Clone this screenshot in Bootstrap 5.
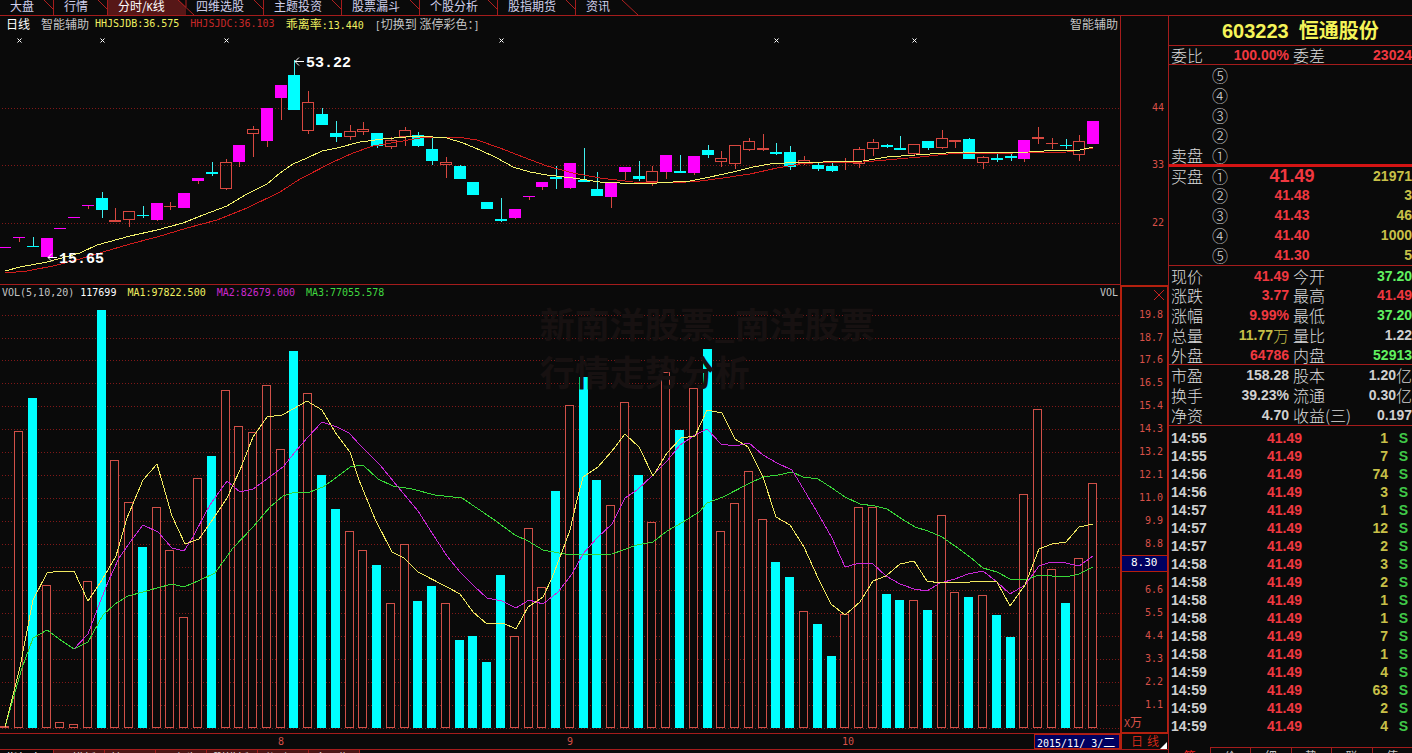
<!DOCTYPE html>
<html lang="zh-CN">
<head>
<meta charset="utf-8">
<meta name="viewport" content="width=device-width, initial-scale=1">
<title>603223 恒通股份</title>
<link href="https://cdn.jsdelivr.net/npm/bootstrap@5.3.0/dist/css/bootstrap.min.css" rel="stylesheet">
<style>
:root { --line:#a41c1c; --line2:#b4200e; --up:#d85048; --dim:#c4c4c4; --bg:#0a0a0a; }
body { background:var(--bg); color:var(--dim); font:400 12px/16px "Noto Sans CJK SC", sans-serif; }
a { color:inherit; text-decoration:none; }
.num { font:400 10px/16px "DejaVu Sans Mono", monospace; white-space:pre; }
.c-y { color:#f0f060; } .c-r { color:#c82828; } .c-m { color:#cc28cc; } .c-g { color:#40d840; } .c-w { color:#fff; }

.menu-bar { height:16px; border-bottom:1px solid var(--line); }
.menu-tab { width:78px; height:15px; line-height:11px; padding-left:10px; color:#d0d0ec; border-right:1px solid var(--line); position:relative; }
.menu-tab.short { width:54px; }
.menu-tab svg { position:absolute; top:0; right:0; }
.menu-tab.on { border-right:0; color:#fff; background:#561717; }
.menu-tab.on svg { right:-8px; z-index:1; }
.menu-tab.end { width:62px; border-right:0; }

.chart-grid { display:grid; grid-template-columns:minmax(0,1fr) 48px; grid-template-rows:minmax(0,269fr) minmax(0,449fr); }
.pane { position:relative; overflow:hidden; border-bottom:1px solid var(--line); }
.pane > svg { position:absolute; inset:0; width:100%; height:100%; }
.pane-head { position:relative; height:16px; padding:0 2px; z-index:2; }
.gap-head { gap:11px; }
.price-scale { position:relative; border-left:1px solid var(--line); }
.vol-scale { position:relative; border:2px solid var(--line2); border-right-width:1px; }
.tick-label { position:absolute; right:4px; margin-top:-8px; color:var(--up); }
.now-label { position:absolute; left:0; right:0; height:17px; margin-top:-9px; padding-left:9px; background:#000060; border:1px solid var(--line2); border-width:1px 0; color:#fff; line-height:14px; font-size:11px; }
.unit-label { position:absolute; left:2px; bottom:0; color:var(--up); }
.close-btn { position:absolute; right:3px; top:3px; width:10px; height:10px; line-height:0; }
.flag { position:absolute; color:#fff; font:700 15px/16px "Liberation Mono", monospace; margin-top:-6px; white-space:nowrap; }
.flag svg { vertical-align:top; margin-top:1px; }
.dot-mark { position:absolute; width:5px; height:5px; margin:-2px 0 0 -2px; }
.dot-mark svg { display:block; }
.ghost { position:absolute; left:48.2%; top:14px; width:360px; font:700 35px/48px "Noto Sans CJK SC", sans-serif; color:#171111; z-index:1; }

.date-bar { height:16px; border-bottom:1px solid var(--line); }
.dates { position:relative; flex:1; }
.date-tick { position:absolute; color:var(--up); margin-left:-3px; line-height:15px; }
.date-now { position:absolute; right:0; top:0; width:86px; height:15px; background:#000060; border:1px solid var(--line2); color:#fff; line-height:13px; padding-left:2px; white-space:nowrap; }
.date-now .num { line-height:12px; }
.period { width:48px; padding:0 9px; line-height:14px; color:#d02818; background:none; border:0; border-left:2px solid var(--line2); position:relative; font-size:12px; }
.period svg { position:absolute; right:1px; bottom:0; }
.foot-tabs { height:3px; overflow:hidden; }
.foot-tabs a { width:51px; padding:0 6px; line-height:15px; background:#4c1616; color:#ddd; border-right:1px solid var(--line); white-space:nowrap; }
.foot-tabs a.on { width:54px; background:none; color:#fff; }

.quote { width:244px; border-left:1px solid var(--line); overflow:hidden; }
.stock-name { height:30px; font:700 20px/30px "Liberation Sans","Noto Sans CJK SC", sans-serif; color:#f4f458; border-bottom:1px solid var(--line); padding-left:53px; gap:10px; margin:0; }
.quote table { width:100%; table-layout:fixed; border-collapse:separate; border-spacing:0; font:700 14px/16px "Liberation Sans","Noto Sans CJK SC", sans-serif; }
.quote td, .quote th { padding:0; height:20px; white-space:nowrap; vertical-align:middle; }
.quote th { font:300 16px/16px "Noto Sans CJK SC", sans-serif; padding-left:2px; color:#dcdcdc; }
.quote th.second { padding-left:4px; }
.quote i { display:block; font:300 16px/16px "Noto Sans CJK SC", sans-serif; color:#dcdcdc; }
.quote td i.unit { display:inline-block; vertical-align:top; color:inherit; }
.block-line { border-bottom:1px solid var(--line); }
.quote .block-ratio tr > * { height:18px; }
.quote .block-ask tr:last-child > * { height:19px; }
.block-bid { border-top:3px solid #d41414; }
.quote .block-bid tr:first-child > * { height:18px; }
.quote .block-day tr:first-child > *, .quote .block-day tr:last-child > * { height:19px; }
.p-up { color:#f03840; } .p-dn { color:#60f060; } .p-vol { color:#c8c048; } .p-s { color:#40c848; } .p-n { color:#d0d0d0; }
.big { font-size:18px; }
.block-trades { flex:1; min-height:0; overflow:hidden; padding-top:3px; }
.quote .block-trades td { height:18px; }
.quote .block-trades td:first-child { padding-left:2px; }
.quote .block-trades td:last-child { padding-left:7px; }
.side-tabs { height:6px; overflow:hidden; }
.side-tabs a { flex:1; text-align:center; line-height:16px; border-top:1px solid var(--line); border-left:1px solid var(--line); }
.side-tabs a.on { border-color:transparent; color:#f02020; }
</style>
</head>
<body>
<div class="vh-100 d-flex flex-column overflow-hidden">
  <nav class="menu-bar d-flex flex-shrink-0" id="menu"></nav>
  <main class="d-flex flex-grow-1" style="min-height:0">
    <div class="d-flex flex-column flex-grow-1" style="min-width:0">
      <div class="chart-grid flex-grow-1" style="min-height:0">
        <section class="pane" id="kPane">
          <div class="pane-head d-flex gap-head">
            <span class="c-w ps-1">日线</span><span>智能辅助</span>
            <span class="num c-y" style="margin-left:-5px">HHJSJDB:36.575</span>
            <span class="num c-r">HHJSJDC:36.103</span>
            <span class="c-y">乖离率<span class="num">:13.440</span></span>
            <span><span class="num">[</span>切换到 涨停彩色：<span class="num">]</span></span>
            <span class="ms-auto">智能辅助</span>
          </div>
          <svg id="kChart" viewBox="0 16 1120 268" preserveAspectRatio="none" shape-rendering="crispEdges"></svg>
        </section>
        <div class="price-scale" id="kScale"></div>
        <section class="pane" id="vPane">
          <div class="pane-head d-flex gap-head num">
            <span><span>VOL(5,10,20)</span> <span class="c-w">117699</span></span>
            <span class="c-y">MA1:97822.500</span><span class="c-m">MA2:82679.000</span><span class="c-g">MA3:77055.578</span>
            <span class="ms-auto">VOL</span>
          </div>
          <svg id="vChart" viewBox="0 285 1120 448" preserveAspectRatio="none" shape-rendering="crispEdges"></svg>
          <div class="ghost">新南洋股票_南洋股票<br>行情走势分析</div>
        </section>
        <div class="vol-scale" id="vScale">
          <button class="close-btn btn p-0 border-0" type="button" aria-label="关闭"><svg width="10" height="10" stroke="#c82020" fill="none"><path d="M0 0L10 10M10 0L0 10"/></svg></button>
          <span class="unit-label"><span class="num">X</span>万</span>
        </div>
      </div>
      <div class="date-bar d-flex flex-shrink-0">
        <div class="dates" id="dates"><span class="date-now"><span class="num">2015/11/ 3/</span>二</span></div>
        <button class="period d-flex justify-content-between" type="button"><span>日</span><span>线</span><svg width="7" height="7"><path d="M7 0V7H0z" fill="#fff"/></svg></button>
      </div>
      <nav class="foot-tabs d-flex flex-shrink-0"><a href="#" class="on">指标窗</a><a href="#">口模板</a><a href="#">管理器</a><a href="#">另存为</a><a href="#">删模板</a><a href="#">分时图</a><a href="#">多周期</a></nav>
    </div>
    <aside class="quote d-flex flex-column flex-shrink-0">
      <h1 class="stock-name d-flex"><span>603223</span><span>恒通股份</span></h1>
      <table class="block-line block-ratio">
        <colgroup><col style="width:40px"><col style="width:80px"><col style="width:64px"><col></colgroup>
        <tr><th>委比</th><td class="p-up text-end">100.00%</td><th class="second">委差</th><td class="p-up text-end">23024</td></tr>
      </table>
      <table class="block-ask" id="asks"><colgroup><col style="width:42px"><col style="width:18px"><col style="width:126px"><col></colgroup></table>
      <table class="block-line block-bid" id="bids"><colgroup><col style="width:42px"><col style="width:18px"><col style="width:126px"><col></colgroup></table>
      <table class="block-line block-day" id="info1"><colgroup><col style="width:40px"><col style="width:80px"><col style="width:64px"><col></colgroup></table>
      <table class="block-line" id="info2"><colgroup><col style="width:40px"><col style="width:80px"><col style="width:64px"><col></colgroup></table>
      <div class="block-trades"><table id="trades"><colgroup><col style="width:60px"><col style="width:73px"><col style="width:86px"><col></colgroup></table></div>
      <nav class="side-tabs d-flex flex-shrink-0"><a href="#" class="on">笔</a><a href="#">价</a><a href="#">细</a><a href="#">势</a><a href="#">联</a><a href="#">值</a></nav>
    </aside>
  </main>
</div>
<script src="https://cdn.jsdelivr.net/npm/bootstrap@5.3.0/dist/js/bootstrap.bundle.min.js"></script>
<script>
const $ = id => document.getElementById(id);
const W = 1120, barX = i => Math.round(5.2 + 13.772 * i);

/* menu */
const tabs = ['大盘','行情','分时/<span class="num">K</span>线','四维选股','主题投资','股票漏斗','个股分析','股指期货','资讯'];
$('menu').innerHTML = tabs.map((t, i) => {
  const on = i === 2, end = i === 8;
  const cls = (i < 2 ? ' short' : '') + (on ? ' on' : '') + (end ? ' end' : '');
  const art = on ? '<svg width="16" height="15"><path d="M1 0H16V15z" fill="#0a0a0a"/><path d="M0 0L16 15M8 0V7" stroke="#b02020" fill="none"/></svg>'
    : end ? '<svg width="16" height="15"><path d="M0 0L16 15" stroke="#b02020"/></svg>'
    : '<svg width="9" height="9"><path d="M0 0L9 9" stroke="#b02020"/></svg>';
  return `<a href="#" class="menu-tab flex-shrink-0${cls}">${t}${art}</a>`;
}).join('');

/* daily candles: kind, body top, body bottom, wick top, wick bottom */
const K = `m247,248,,;m237,238,,242;c246,247,237,;m238,257,,;m228,229,,;m217,218,,;m205,206,,209;c198,210,192,218;r220,222,208,;r211,220,,227;c215,216,206,218;m203,220,,221;r206,206,202,210;m193,208,,;m178,181,,184;c172,174,162,176;r162,189,159,190;m145,162,,167;r129,134,126,157;m108,141,,147;m85,98,,120;c75,110,60,;r102,131,91,134;c114,125,108,;c133,137,121,142;r131,137,125,140;r129,132,122,135;c133,146,,148;r140,147,137,149;r130,137,127,146;c135,146,132,147;c149,161,138,165;r162,165,157,178;c166,179,165,;c182,195,,;c202,209,,;c219,221,198,222;m209,218,,219;m196,197,,200;m182,187,,190;c177,179,166,189;m163,188,,189;c180,182,148,;c189,196,172,;m182,197,,208;m167,172,,180;c176,179,161,181;r171,182,166,186;m155,172,,179;c171,173,155,;m156,173,,175;c150,155,145,158;r158,162,151,167;r145,164,,169;r141,150,138,151;r148,150,134,151;c152,154,143,155;c152,167,146,170;r160,164,156,165;c165,169,163,171;c166,171,163,172;r162,162,158,170;r149,164,147,168;r142,149,139,156;c145,147,144,148;c148,150,136,;r144,154,,155;c141,148,,150;r138,148,130,149;r140,142,,148;c139,159,138,;r157,163,156,169;c158,160,153,162;c156,158,153,161;m140,159,,162;r137,139,127,144;r143,143,138,149;c145,146,139,149;r141,155,135,161;m121,144,,`.split(';');
const rule = y => `<path d="M2 ${y + .5}H1120" stroke="#801818" stroke-dasharray="1 2"/>`;
const line = (pts, c) => `<polyline points="${pts}" fill="none" stroke="${c}"/>`;
let s = [108, 165, 223].map(rule).join('');
K.forEach((d, i) => {
  const kind = d[0], [a, b, t, u] = d.slice(1).split(',').map(v => v === '' ? null : +v), x = barX(i);
  const wc = kind === 'c' ? '#40f0f0' : '#d84840';
  if (t !== null) s += `<path d="M${x + .5} ${t}V${a}" stroke="${wc}"/>`;
  if (u !== null) s += `<path d="M${x + .5} ${b}V${u}" stroke="${wc}"/>`;
  s += kind === 'r' ? `<rect x="${x - 5.5}" y="${a + .5}" width="11" height="${Math.max(b - a - 1, 0) || .1}" fill="none" stroke="#d84840"/>`
    : `<rect x="${x - 6}" y="${a}" width="12" height="${b - a}" fill="${kind === 'c' ? '#0ff' : '#f0f'}"/>`;
});
s += line('5,273 27,271 53,266 80,259 103,252 130,244 157,237 187,228 217,220 247,208 280,192 300,179 333,162 353,153 373,146 397,142 420,138 433,137 457,137 477,140 500,148 523,157 547,166 573,173 600,178 633,182 673,183 700,181 723,178 750,174 777,168 800,164 813,163 863,162 920,157 957,153 1013,153 1067,152 1093,148', '#d01c1c');
s += line('5,271 20,267 47,262 80,253 97,245 130,236 157,230 183,223 203,215 227,206 247,194 267,184 280,173 293,164 307,158 322,151 337,148 360,142 383,139 417,136 433,137 447,138 463,143 480,150 497,158 513,167 530,172 547,175 573,178 600,182 620,183 657,183 690,181 710,177 733,172 753,167 770,164 800,162 823,162 863,161 887,157 930,154 963,152 1013,153 1060,150 1080,150 1093,147', '#f4f46c');
$('kChart').innerHTML = s;
const pct = (v, lo, span) => ((v - lo) / span * 100).toFixed(3) + '%';
const arrow = '<svg width="12" height="9" stroke="#fff" fill="none"><path d="M1 4.500H10M5 0.500L1 4.500L5 8.500"/></svg>';
$('kPane').insertAdjacentHTML('beforeend',
  [['53.22', 294, 62], ['15.65', 47, 258]].map(([t, x, y]) => `<span class="flag" style="left:${pct(x, 0, W)};top:${pct(y, 16, 268)}">${arrow}${t}</span>`).join('') +
  [1, 7, 16, 36, 56, 66].map(i => `<span class="dot-mark" style="left:${pct(barX(i), 0, W)};top:${pct(40, 16, 268)}"><svg width="5" height="5" stroke="#fff"><path d="M.5 .5L4.500 4.500M4.500 .5L.5 4.500"/></svg></span>`).join(''));
$('kScale').innerHTML = [[44, 108], [33, 165], [22, 223]].map(([t, y]) => `<span class="tick-label num" style="top:${pct(y, 16, 269)}">${t}</span>`).join('');

/* volume bars: kind and top edge */
const V = 'r726 r431 c398 r585 r722 r724 r581 c310 r460 r502 c547 r507 r550 r617 r478 c456 r390 r426 r432 r385 r449 c351 r393 c475 c509 r531 r550 c565 r603 r544 c601 c586 r603 c640 c636 c662 c575 r636 r528 r587 c491 r405 c377 c480 r505 r402 c475 r522 r372 c430 r388 c349 r531 r503 r471 r519 c562 c577 r611 c624 c656 r614 r507 r507 c594 c600 r600 c610 r515 r592 c597 r595 c615 c637 r494 r409 r569 c603 r558 r483'.split(' ');
const rules = [315, 338, 360];
for (let y = 383; y <= 728; y += 23) rules.push(y);
s = rules.map(rule).join('');
V.forEach((d, i) => {
  const y = +d.slice(1), x = barX(i);
  s += d[0] === 'c' ? `<rect x="${x - 5}" y="${y}" width="9" height="${728 - y}" fill="#0ff"/>`
    : `<rect x="${x - 4.5}" y="${y + .5}" width="8" height="${727 - y}" fill="#0a0a0a" stroke="#d05048"/>`;
});
s += line('5,727 22,668 33,638 47,630 62,641 74,649 88,642 103,615 115,604 128,596 143,592 157,588 172,584 184,587 200,580 215,573 233,548 253,527 270,507 283,496 295,492 310,492 323,487 337,477 350,467 363,465 378,479 393,486 412,489 435,495 462,498 493,519 515,535 528,541 543,550 570,555 612,554 637,545 653,542 667,531 683,522 699,512 707,503 723,497 750,483 763,477 778,475 792,472 803,477 818,479 832,488 845,497 860,504 875,506 887,509 902,519 915,527 928,531 942,537 955,546 970,557 983,568 997,572 1010,579 1027,580 1038,575 1066,577 1079,574 1093,567', '#38d838');
s += line('74,649 88,634 97,610 108,582 119,558 133,538 143,525 158,532 172,548 184,551 193,537 207,510 212,502 227,481 240,492 253,489 267,479 283,467 295,452 308,437 322,422 337,427 349,433 360,445 380,465 398,487 418,511 432,533 447,556 460,572 473,585 487,598 502,601 516,608 529,600 543,604 558,592 572,574 583,554 597,538 612,524 619,510 625,498 637,490 653,475 667,461 680,445 695,435 707,429 721,444 735,446 749,443 763,455 777,463 792,470 807,495 820,517 832,538 845,567 860,563 873,564 886,576 900,584 914,589 927,591 940,583 955,579 968,574 983,571 997,582 1010,594 1025,585 1039,566 1051,562 1066,563 1079,566 1093,556', '#c828d8');
s += line('5,727 20,667 33,600 47,573 60,571 74,571 88,601 102,580 116,556 127,518 143,480 157,464 172,516 185,544 199,539 213,519 227,498 240,470 253,437 267,417 282,415 293,409 307,401 322,410 335,432 350,452 359,480 375,519 392,552 404,558 418,572 447,587 460,594 473,612 487,624 503,623 516,629 528,607 543,597 552,578 562,552 570,530 577,500 583,477 598,467 612,451 625,434 639,447 653,476 667,453 681,438 695,436 707,410 722,413 735,439 748,447 763,477 776,517 790,525 804,547 818,578 831,604 845,615 860,602 873,581 886,576 900,564 914,561 927,581 940,583 953,582 970,582 982,581 997,582 1010,606 1025,585 1039,549 1052,544 1066,542 1079,527 1093,524', '#f0e860');
$('vChart').innerHTML = s;
$('vScale').insertAdjacentHTML('beforeend', rules.slice(0, -1).map((y, i) => {
  const v = 19.8 - 1.1 * i;
  return i === 11 ? '' : `<span class="tick-label num" style="top:${pct(y, 287, 445)}">${v.toFixed(1)}</span>`;
}).join('') + `<span class="now-label num" style="top:${pct(564, 287, 445)}">8.30</span>`);
$('dates').insertAdjacentHTML('beforeend', [[8, 20], [9, 41], [10, 61]].map(([t, i]) => `<span class="date-tick num" style="left:${pct(barX(i), 0, W)}">${t}</span>`).join(''));

/* quote panel */
const book = (r, l) => `<tr><th>${l}</th><td class="text-center"><i>${r[0]}</i></td><td class="p-up text-center${r[3] || ''}">${r[1] || ''}</td><td class="p-vol text-end">${r[2] || ''}</td></tr>`;
$('asks').innerHTML += ['⑤', '④', '③', '②', '①'].map((n, i) => book([n], i === 4 ? '卖盘' : '')).join('');
$('bids').innerHTML += [['①', '41.49', 21971, ' big'], ['②', '41.48', 3], ['③', '41.43', 46], ['④', '41.40', 1000], ['⑤', '41.30', 5]].map((r, i) => book(r, i ? '' : '买盘')).join('');
const info = r => `<tr><th>${r[0]}</th><td class="text-end ${r[2]}">${r[1]}</td><th class="second">${r[3]}</th><td class="text-end ${r[5]}">${r[4]}</td></tr>`;
$('info1').innerHTML += [['现价', '41.49', 'p-up', '今开', '37.20', 'p-dn'], ['涨跌', '3.77', 'p-up', '最高', '41.49', 'p-up'], ['涨幅', '9.99%', 'p-up', '最低', '37.20', 'p-dn'], ['总量', '11.77<i class="unit">万</i>', 'p-vol', '量比', '1.22', 'p-n'], ['外盘', '64786', 'p-up', '内盘', '52913', 'p-dn']].map(info).join('');
$('info2').innerHTML += [['市盈', '158.28', 'p-n', '股本', '1.20<i class="unit">亿</i>', 'p-n'], ['换手', '39.23%', 'p-n', '流通', '0.30<i class="unit">亿</i>', 'p-n'], ['净资', '4.70', 'p-n', '收益(三)', '0.197', 'p-n']].map(info).join('');
const T = '55:1 55:7 56:74 56:3 57:1 57:12 57:2 58:3 58:2 58:1 58:1 58:7 58:1 59:4 59:63 59:2 59:4'.split(' ');
$('trades').innerHTML += T.map(t => { const [m, v] = t.split(':'); return `<tr><td class="p-n">14:${m}</td><td class="p-up text-end">41.49</td><td class="p-vol text-end">${v}</td><td class="p-s text-center">S</td></tr>`; }).join('');
</script>
</body>
</html>
